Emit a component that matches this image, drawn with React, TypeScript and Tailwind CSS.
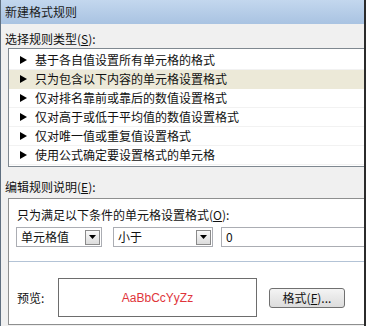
import type { ReactNode } from "react";

const RULES = [
  "基于各自值设置所有单元格的格式",
  "只为包含以下内容的单元格设置格式",
  "仅对排名靠前或靠后的数值设置格式",
  "仅对高于或低于平均值的数值设置格式",
  "仅对唯一值或重复值设置格式",
  "使用公式确定要设置格式的单元格",
];

const FONT = { fontFamily: '"Noto Sans CJK SC", "Liberation Sans", sans-serif' };

function Arrow() {
  return (
    <svg width="7" height="8" viewBox="0 0 7 8" className="shrink-0">
      <polygon points="0,0 7,4 0,8" fill="#000" />
    </svg>
  );
}

function DropButton() {
  return (
    <div className="w-[15px] h-[15px] border border-[#8a8a8a] bg-gradient-to-b from-[#fafafa] to-[#dcdcdc] flex items-center justify-center">
      <svg width="7" height="4" viewBox="0 0 7 4">
        <polygon points="0,0 7,0 3.5,4" fill="#000" />
      </svg>
    </div>
  );
}

function Combo({ width, children }: { width: string; children: ReactNode }) {
  return (
    <div className={`${width} h-[20px] border border-[#abadb3] bg-white flex items-center justify-between pl-[4px] pr-[1px]`}>
      <span>{children}</span>
      <DropButton />
    </div>
  );
}

export default function App() {
  return (
    <div
      style={FONT}
      className="w-[366px] h-[326px] overflow-hidden bg-[#f0f0f0] border-l border-r-2 border-l-[#5f6f80] border-r-[#2b2b2b] text-[12px] leading-[16px] text-[#111]"
    >
      {/* Title bar */}
      <div className="h-[24px] pl-[4px] flex items-center bg-gradient-to-b from-[#c3d7ee] to-[#a9c3e2] text-[#1b1b1b]">
        新建格式规则
      </div>

      <div className="h-[24px] pl-[4px] pt-[7px]">
        选择规则类型(<u>S</u>):
      </div>

      {/* Rule type list */}
      <div className="ml-[7px] border border-r-0 border-[#7f8890] bg-white pt-[2px] pb-[1px]">
        {RULES.map((r, i) => (
          <div
            key={r}
            className={
              "h-[19px] flex items-center gap-[8px] pl-[11px] border-b " +
              (i === 1 ? "bg-[#ece9d8] border-[#ece9d8]" : "border-[#f2f2f2]")
            }
          >
            <Arrow />
            <span>{r}</span>
          </div>
        ))}
      </div>

      <div className="h-[31px] pl-[4px] pt-[12px]">
        编辑规则说明(<u>E</u>):
      </div>

      {/* Rule description panel */}
      <div className="ml-[7px] h-[127px] border border-r-0 border-[#8e8f8f] bg-white">
        <div className="pl-[8px] pt-[8px]">只为满足以下条件的单元格设置格式(<u>O</u>):</div>
        <div className="mt-[4px] pl-[7px] flex items-center">
          <Combo width="w-[86px]">单元格值</Combo>
          <div className="w-[11px]" />
          <Combo width="w-[100px]">小于</Combo>
          <div className="w-[8px]" />
          <div className="flex-1 h-[20px] border border-r-0 border-[#abadb3] pl-[4px] flex items-center">0</div>
        </div>

        <div className="mt-[14px] h-px bg-[#b3c3d6]" />

        <div className="mt-[16px] pl-[8px] flex items-center">
          <span className="w-[41px]">预览:</span>
          <div
            className="w-[199px] h-[39px] border border-[#6d6d6d] flex items-center justify-center text-[#e0353b] text-[12px]"
            style={{ fontFamily: '"Liberation Sans", Arial, sans-serif' }}
          >
            AaBbCcYyZz
          </div>
          <button className="ml-[12px] w-[76px] h-[20px] rounded-[3px] border border-[#707070] bg-gradient-to-b from-[#f4f4f4] to-[#dcdcdc] flex items-center justify-center text-[12px]">
            格式(<u>F</u>)...
          </button>
        </div>
      </div>
    </div>
  );
}
